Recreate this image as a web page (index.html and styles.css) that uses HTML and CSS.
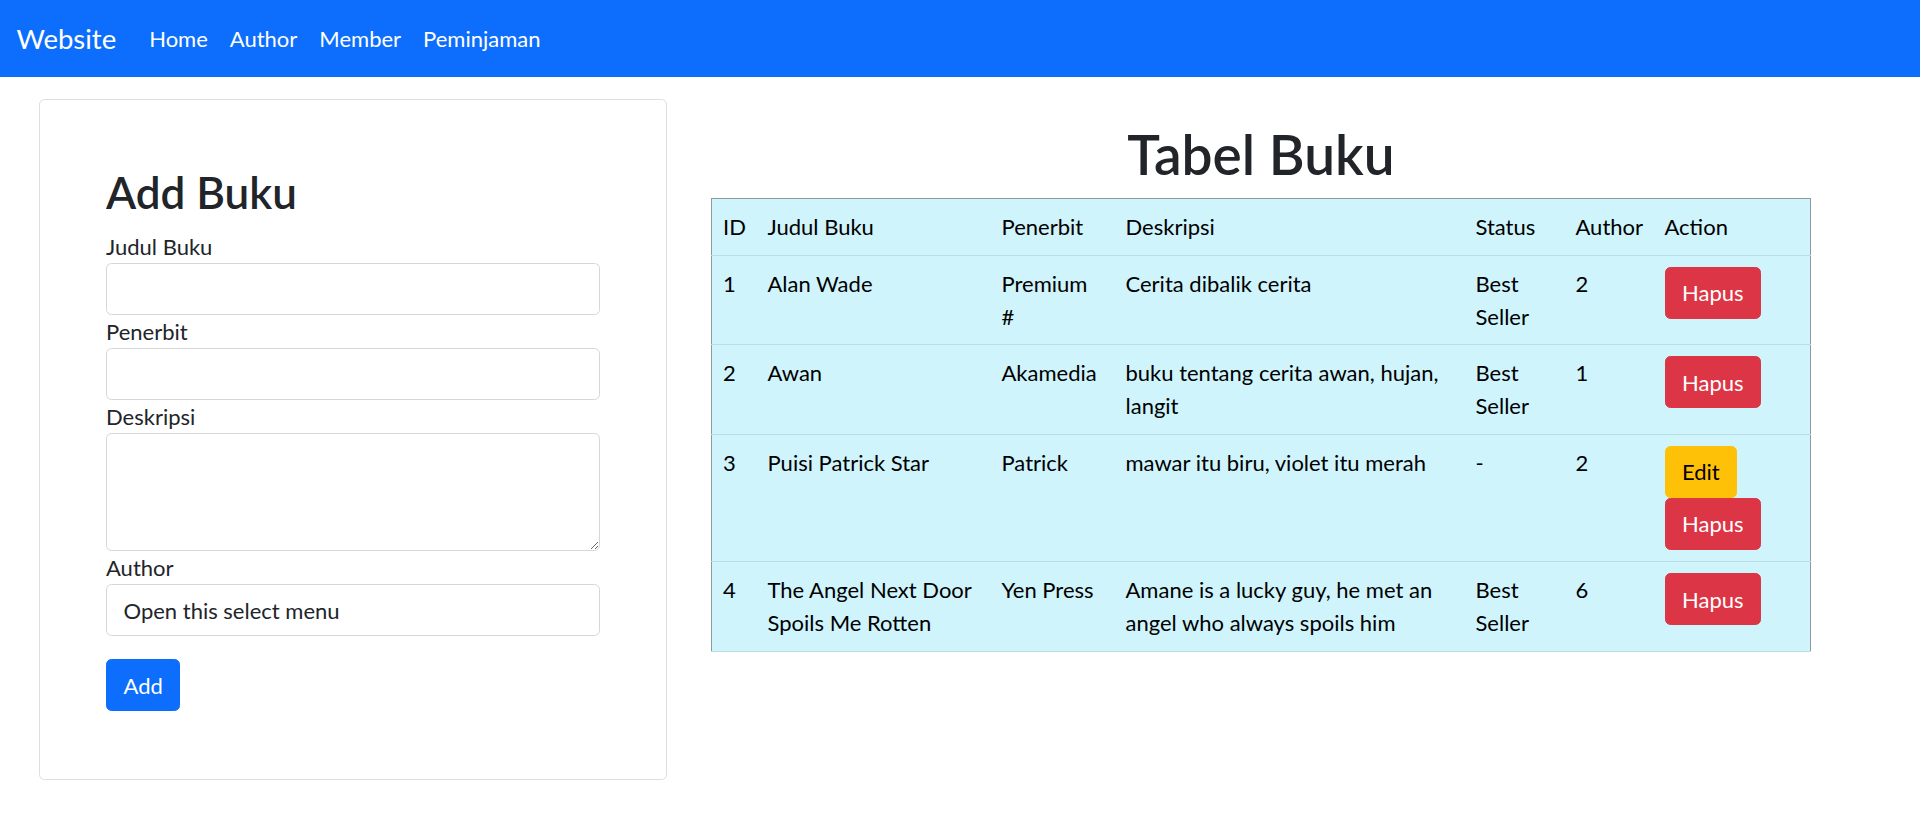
FILE: index.html
```html
<!DOCTYPE html>
<html lang="id">
<head>
<meta charset="utf-8">
<title>Website - Buku</title>
<link rel="stylesheet" href="styles.css">
</head>
<body>
<nav class="navbar">
  <a class="brand" href="#">Website</a>
  <ul class="nav-links">
    <li><a class="nav-link" href="#">Home</a></li>
    <li><a class="nav-link" href="#">Author</a></li>
    <li><a class="nav-link" href="#">Member</a></li>
    <li><a class="nav-link" href="#">Peminjaman</a></li>
  </ul>
</nav>
<main class="main">
  <section class="card">
    <h2 class="card-title">Add Buku</h2>
    <form class="form">
      <label class="label" for="judul">Judul Buku</label>
      <input class="control" id="judul" type="text">
      <label class="label" for="penerbit">Penerbit</label>
      <input class="control" id="penerbit" type="text">
      <label class="label" for="deskripsi">Deskripsi</label>
      <textarea class="control textarea" id="deskripsi" rows="3"></textarea>
      <label class="label" for="author">Author</label>
      <select class="control select" id="author">
        <option>Open this select menu</option>
      </select>
      <button class="btn btn-primary btn-add" type="button">Add</button>
    </form>
  </section>
  <section class="table-section">
    <h1 class="table-title">Tabel Buku</h1>
    <table class="book-table">
      <colgroup>
        <col class="c-id"><col class="c-judul"><col class="c-penerbit"><col class="c-desk"><col class="c-status"><col class="c-author"><col class="c-action">
      </colgroup>
      <thead>
        <tr><th>ID</th><th>Judul Buku</th><th>Penerbit</th><th>Deskripsi</th><th>Status</th><th>Author</th><th>Action</th></tr>
      </thead>
      <tbody>
        <tr>
          <td>1</td><td>Alan Wade</td><td>Premium #</td><td>Cerita dibalik cerita</td><td>Best Seller</td><td>2</td>
          <td><div class="actions"><button class="btn btn-danger" type="button">Hapus</button></div></td>
        </tr>
        <tr>
          <td>2</td><td>Awan</td><td>Akamedia</td><td>buku tentang cerita awan, hujan, langit</td><td>Best Seller</td><td>1</td>
          <td><div class="actions"><button class="btn btn-danger" type="button">Hapus</button></div></td>
        </tr>
        <tr>
          <td>3</td><td>Puisi Patrick Star</td><td>Patrick</td><td>mawar itu biru, violet itu merah</td><td>-</td><td>2</td>
          <td><div class="actions"><button class="btn btn-warning" type="button">Edit</button><button class="btn btn-danger" type="button">Hapus</button></div></td>
        </tr>
        <tr>
          <td>4</td><td>The Angel Next Door Spoils Me Rotten</td><td>Yen Press</td><td>Amane is a lucky guy, he met an angel who always spoils him</td><td>Best Seller</td><td>6</td>
          <td><div class="actions"><button class="btn btn-danger" type="button">Hapus</button></div></td>
        </tr>
      </tbody>
    </table>
  </section>
</main>
</body>
</html>
```

FILE: styles.css
```css
* { box-sizing: border-box; }

body {
  margin: 0;
  font-family: Lato, "Open Sans", "Noto Sans", sans-serif;
  font-size: 22px;
  line-height: 33px;
  color: #212529;
  background: #fff;
}

.navbar {
  display: flex;
  align-items: center;
  background: #0d6efd;
  padding: 11px 16.5px;
  height: 77px;
}

.brand {
  color: #fff;
  text-decoration: none;
  font-size: 27.5px;
  line-height: 41px;
  padding: 7px 0;
  margin-right: 22px;
}

.nav-links {
  display: flex;
  list-style: none;
  margin: 0;
  padding: 0;
}

.nav-link {
  display: block;
  color: #fff;
  text-decoration: none;
  padding: 11px;
}

.main {
  display: flex;
  align-items: flex-start;
  gap: 44px;
  padding: 22px 0 0 39px;
}

.card {
  width: 628px;
  flex: none;
  border: 1px solid #dcdfe2;
  border-radius: 5.5px;
  padding: 66px 66px 68px;
}

.card-title {
  font-size: 44px;
  font-weight: 600;
  line-height: 53px;
  margin: 0 0 11px;
}

.form {
  display: flex;
  flex-direction: column;
  align-items: stretch;
}

.label {
  display: block;
  line-height: 33px;
}

.control {
  display: block;
  width: 100%;
  height: 52px;
  padding: 8px 16.5px;
  font: inherit;
  color: #212529;
  background: #fff;
  border: 1px solid #d3d7db;
  border-radius: 5.5px;
}

.textarea {
  height: 118px;
  resize: vertical;
}

.select {
  appearance: none;
  -webkit-appearance: none;
}

.btn {
  display: inline-block;
  font: inherit;
  line-height: 33px;
  padding: 8.5px 16.5px;
  border: 1px solid transparent;
  border-radius: 5.5px;
  cursor: pointer;
}

.btn-primary { background: #0d6efd; border-color: #0d6efd; color: #fff; }
.btn-danger { background: #dc3545; border-color: #dc3545; color: #fff; }
.btn-warning { background: #ffc107; border-color: #ffc107; color: #000; }

.btn-add {
  align-self: flex-start;
  margin-top: 23px;
}

.table-section {
  width: 1100px;
  flex: none;
  padding-top: 22px;
}

.table-title {
  font-size: 55px;
  font-weight: 600;
  line-height: 66px;
  margin: 0 0 11px;
  text-align: center;
}

.book-table {
  width: 100%;
  table-layout: fixed;
  border-collapse: collapse;
  border: 1px solid #8a9ca1;
  background: #cff4fc;
  color: #000;
}

.book-table th,
.book-table td {
  padding: 11.25px 11px;
  border-bottom: 1px solid #badce3;
  text-align: left;
  vertical-align: top;
  font-weight: 400;
}

.c-id { width: 45px; }
.c-judul { width: 234px; }
.c-penerbit { width: 124px; }
.c-desk { width: 350px; }
.c-status { width: 100px; }
.c-author { width: 89px; }
.c-action { width: 157px; }

.actions {
  display: flex;
  flex-wrap: wrap;
}
```
